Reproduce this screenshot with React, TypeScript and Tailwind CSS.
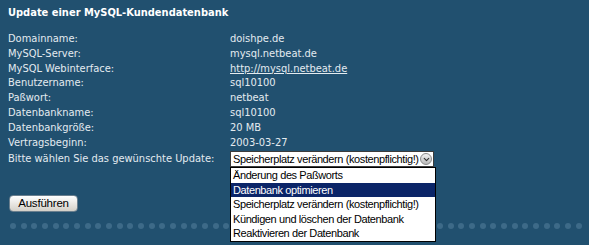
import { ChevronDown } from 'lucide-react';

const rows: [string, string, boolean?][] = [
  ['Domainname:', 'doishpe.de'],
  ['MySQL-Server:', 'mysql.netbeat.de'],
  ['MySQL Webinterface:', 'http://mysql.netbeat.de', true],
  ['Benutzername:', 'sql10100'],
  ['Paßwort:', 'netbeat'],
  ['Datenbankname:', 'sql10100'],
  ['Datenbankgröße:', '20 MB'],
  ['Vertragsbeginn:', '2003-03-27'],
];

const options = [
  'Änderung des Paßworts',
  'Datenbank optimieren',
  'Speicherplatz verändern (kostenpflichtig!)',
  'Kündigen und löschen der Datenbank',
  'Reaktivieren der Datenbank',
];

export default function App() {
  return (
    <div className="relative w-[589px] h-[245px] overflow-hidden bg-[#21506f] text-[#e4ebf0] font-['DejaVu_Sans_Condensed','DejaVu_Sans',sans-serif] text-[11px]">
      <div className="pt-[5px] pl-[8px]">
        <h1 className="h-[16px] text-[11px] font-bold text-white leading-[16px] whitespace-nowrap">Update einer MySQL-Kundendatenbank</h1>

        <div className="mt-[11px] grid grid-cols-[222px_1fr] leading-[14.8px]">
          {rows.map(([label, value, link]) => (
            <div key={label} className="contents">
              <div className="whitespace-nowrap">{label}</div>
              <div className={link ? 'underline whitespace-nowrap' : 'whitespace-nowrap'}>{value}</div>
            </div>
          ))}
          <div className="mt-[0px] h-[18px] leading-[18px] whitespace-nowrap">Bitte wählen Sie das gewünschte Update:</div>
          <div className="mt-[1px] h-[17px]">
            <div className="relative flex items-center w-[204px] h-[16px] bg-white border border-[#3c3c3c] text-black font-['Liberation_Sans',Arial,sans-serif] text-[11px] tracking-[-0.4px] leading-[14px]">
              <span className="pl-[2px] whitespace-nowrap">Speicherplatz verändern (kostenpflichtig!)</span>
              <span className="absolute right-[1px] top-[1px] flex items-center justify-center w-[12px] h-[12px] rounded-full bg-gradient-to-b from-[#f4f4f4] to-[#b9b9b9] border border-[#8a8a8a]">
                <ChevronDown size={9} strokeWidth={3} className="text-[#333]" />
              </span>
            </div>
          </div>
        </div>

        <button className="block mt-[27px] ml-[1px] w-[69px] h-[17px] rounded-[4px] border border-[#6a7f8e] bg-gradient-to-b from-[#ffffff] to-[#d4d0c8] text-black font-['Liberation_Sans',Arial,sans-serif] text-[11.5px] tracking-[-0.2px] leading-[15px]">
          Ausführen
        </button>

        <div className="mt-[11px] mr-[7px] ml-[2px] flex justify-between">
          {Array.from({ length: 54 }).map((_, i) => (
            <span key={i} className="w-[6px] h-[6px] rounded-full bg-[#3d6a88]" />
          ))}
        </div>
      </div>

      <ul className="absolute left-[230px] top-[167px] w-[206px] bg-white border border-black text-black font-['Liberation_Sans',Arial,sans-serif] text-[11px] tracking-[-0.4px] leading-[14.6px]">
        {options.map((o, i) => (
          <li key={o} className={`pl-[2px] whitespace-nowrap ${i === 1 ? 'bg-[#0b2568] text-white' : ''}`}>
            {o}
          </li>
        ))}
      </ul>
    </div>
  );
}
